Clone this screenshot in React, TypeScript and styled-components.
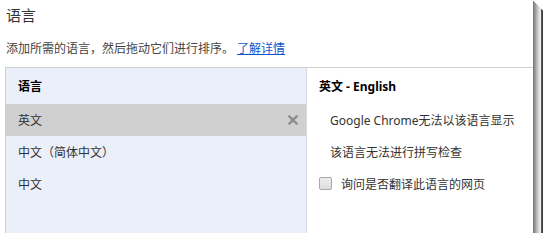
import React from "react";
import styled, { createGlobalStyle } from "styled-components";

const GlobalStyle = createGlobalStyle`
  html, body { margin: 0; padding: 0; background: #ffffff; }
  body {
    font-family: "Segoe UI", "Noto Sans", "Noto Sans CJK SC", sans-serif;
    -webkit-font-smoothing: antialiased;
  }
`;

const Page = styled.div`
  width: 533px;
  height: 233px;
  background: #ffffff;
  overflow: hidden;
  display: flex;
  flex-direction: column;
  box-shadow:
    1px 1px 0 #7c7c7c,
    2px 2px 0 #8e8e8e,
    3px 3px 0 #a0a0a0,
    4px 4px 0 #b2b2b2,
    5px 5px 0 #c4c4c4,
    6px 6px 0 #d4d4d4,
    7px 7px 0 #e2e2e2,
    8px 8px 0 #ececec,
    9px 9px 0 #5a5a5a,
    10px 10px 0 #3a3a3a;
`;

const Title = styled.h1`
  margin: 5px 0 0 6px;
  font-size: 15px;
  line-height: 20px;
  font-weight: normal;
  color: #333333;
`;

const Description = styled.p`
  margin: 15px 0 0 6px;
  font-size: 12px;
  line-height: 18px;
  color: #444444;
`;

const Link = styled.a`
  margin-left: 3px;
  color: #1155cc;
  text-decoration: underline;
  cursor: pointer;
`;

const Box = styled.div`
  margin: 9px 0 0 5px;
  flex: 1;
  display: flex;
  border-top: 1px solid #cfcfcf;
  border-left: 1px solid #cfcfcf;
`;

const ListPanel = styled.div`
  width: 300px;
  background: #eaeffa;
  border-right: 1px solid #d4d8e0;
  display: flex;
  flex-direction: column;
`;

const DetailPanel = styled.div`
  flex: 1;
  background: #ffffff;
  display: flex;
  flex-direction: column;
`;

const PanelHeader = styled.div`
  height: 36px;
  display: flex;
  align-items: center;
  padding-left: 12px;
  font-size: 12px;
  font-weight: bold;
  color: #000000;
`;

const LangRow = styled.div<{ $selected?: boolean }>`
  height: 32px;
  display: flex;
  align-items: center;
  justify-content: space-between;
  padding: 0 8px 0 12px;
  font-size: 12px;
  color: #333333;
  background: ${(p) => (p.$selected ? "#d0d0d0" : "transparent")};
`;

const InfoRow = styled.div<{ $indent: number }>`
  height: 32px;
  display: flex;
  align-items: center;
  padding-left: ${(p) => p.$indent}px;
  font-size: 12px;
  color: #333333;
`;

const Checkbox = styled.span`
  width: 11px;
  height: 11px;
  border: 1px solid #a8a8a8;
  border-radius: 2px;
  background: linear-gradient(#ededed, #dedede);
  margin: -2px 9px 0 0;
  flex: none;
`;

const CloseIcon = () => (
  <svg width="10" height="10" viewBox="0 0 10 10" aria-hidden="true">
    <path d="M1.5 1.5 L8.5 8.5 M8.5 1.5 L1.5 8.5" stroke="#8a8a8a" strokeWidth="2.3" strokeLinecap="square" />
  </svg>
);

const languages = ["英文", "中文（简体中文）", "中文"];

export default function App() {
  return (
    <>
      <GlobalStyle />
      <Page>
        <Title>语言</Title>
        <Description>
          添加所需的语言，然后拖动它们进行排序。<Link>了解详情</Link>
        </Description>
        <Box>
          <ListPanel>
            <PanelHeader>语言</PanelHeader>
            {languages.map((lang, i) => (
              <LangRow key={lang} $selected={i === 0}>
                <span>{lang}</span>
                {i === 0 && <CloseIcon />}
              </LangRow>
            ))}
          </ListPanel>
          <DetailPanel>
            <PanelHeader>英文 - English</PanelHeader>
            <InfoRow $indent={23}>Google Chrome无法以该语言显示</InfoRow>
            <InfoRow $indent={23}>该语言无法进行拼写检查</InfoRow>
            <InfoRow $indent={12}>
              <Checkbox />
              询问是否翻译此语言的网页
            </InfoRow>
          </DetailPanel>
        </Box>
      </Page>
    </>
  );
}
